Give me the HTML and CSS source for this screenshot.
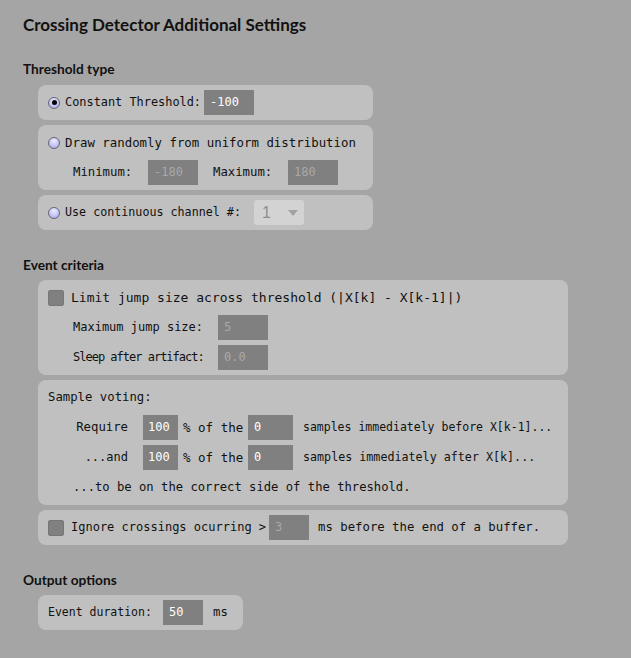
FILE: index.html
```html
<!DOCTYPE html>
<html lang="en">
<head>
<meta charset="utf-8">
<title>Crossing Detector Additional Settings</title>
<link rel="stylesheet" href="styles.css">
</head>
<body>
<div class="page">
  <h1 class="title">Crossing Detector Additional Settings</h1>

  <h2 class="section first">Threshold type</h2>
  <div class="stack narrow">
    <div class="panel">
      <div class="row">
        <span class="radio on"></span>
        <span class="txt fs119">Constant Threshold:</span>
        <span class="field w50 live gap2">-100</span>
      </div>
    </div>
    <div class="panel">
      <div class="row">
        <span class="radio"></span>
        <span class="txt fs124">Draw randomly from uniform distribution</span>
      </div>
      <div class="row indent">
        <span class="txt fs123 lab-min">Minimum:</span>
        <span class="field w50 dim">-180</span>
        <span class="txt fs123 lab-max">Maximum:</span>
        <span class="field w50 dim">180</span>
      </div>
    </div>
    <div class="panel">
      <div class="row">
        <span class="radio"></span>
        <span class="txt fs117 lab-chan">Use continuous channel #:</span>
        <span class="combo"><span class="combo-val">1</span><span class="combo-arrow"></span></span>
      </div>
    </div>
  </div>

  <h2 class="section">Event criteria</h2>
  <div class="stack wide">
    <div class="panel">
      <div class="row">
        <span class="check"></span>
        <span class="txt fs13">Limit jump size across threshold (|X[k] - X[k-1]|)</span>
      </div>
      <div class="row indent">
        <span class="txt fs12 lab-jump">Maximum jump size:</span>
        <span class="field w50 dim">5</span>
      </div>
      <div class="row indent">
        <span class="txt fs12 tight lab-jump">Sleep after artifact:</span>
        <span class="field w50 dim">0.0</span>
      </div>
    </div>
    <div class="panel">
      <div class="row">
        <span class="txt fs123">Sample voting:</span>
      </div>
      <div class="row indent">
        <span class="txt fs123 lab-vote">Require</span>
        <span class="field w35 live">100</span>
        <span class="txt fs125 lab-of">% of the</span>
        <span class="field w45 live">0</span>
        <span class="txt fs115 lab-samples">samples immediately before X[k-1]...</span>
      </div>
      <div class="row indent">
        <span class="txt fs12 lab-vote">...and</span>
        <span class="field w35 live">100</span>
        <span class="txt fs125 lab-of">% of the</span>
        <span class="field w45 live">0</span>
        <span class="txt fs117 lab-samples">samples immediately after X[k]...</span>
      </div>
      <div class="row indent">
        <span class="txt fs122">...to be on the correct side of the threshold.</span>
      </div>
    </div>
    <div class="panel">
      <div class="row">
        <span class="check"></span>
        <span class="txt fs12">Ignore crossings ocurring &gt;</span>
        <span class="field w40 dim gap2">3</span>
        <span class="txt fs123 lab-ms">ms before the end of a buffer.</span>
      </div>
    </div>
  </div>

  <h2 class="section">Output options</h2>
  <div class="stack small">
    <div class="panel">
      <div class="row">
        <span class="txt fs115 lab-dur">Event duration:</span>
        <span class="field w40 live">50</span>
        <span class="txt fs123 lab-unit">ms</span>
      </div>
    </div>
  </div>
</div>
</body>
</html>
```

FILE: styles.css
```css
html, body {
  margin: 0;
  background: #a5a5a5;
}

.page {
  padding: 12px 0 20px 23px;
  color: #111;
}

.title {
  margin: 0 0 22px;
  font: 700 17px/25px Lato, "Noto Sans", sans-serif;
  color: #111;
}

.section {
  margin: 25px 0 5px;
  font: 700 13.7px/20px Lato, "Noto Sans", sans-serif;
  color: #111;
}

.section.first {
  margin-top: 0;
  margin-bottom: 6px;
}

.stack {
  display: flex;
  flex-direction: column;
  gap: 5px;
  margin-left: 15px;
}

.stack.narrow { width: 335px; }
.stack.wide { width: 530px; }
.stack.small { width: 205px; }

.panel {
  background: #c0c0c0;
  border-radius: 8px;
  padding: 5px 10px;
  display: flex;
  flex-direction: column;
  gap: 5px;
}

.row {
  display: flex;
  align-items: center;
  height: 25px;
  font-family: "DejaVu Sans Mono", "Liberation Mono", monospace;
  font-size: 12px;
  white-space: pre;
}

.row.indent {
  padding-left: 25px;
}

.txt {
  color: #111;
  line-height: 25px;
}

.fs115 { font-size: 11.5px; }
.fs117 { font-size: 11.7px; }
.fs119 { font-size: 11.9px; }
.fs12 { font-size: 12px; }
.fs122 { font-size: 12.2px; }
.fs123 { font-size: 12.3px; }
.fs124 { font-size: 12.4px; }
.fs125 { font-size: 12.5px; }
.fs13 { font-size: 13px; }

.tight { letter-spacing: -1px; }

/* radio buttons */
.radio {
  position: relative;
  flex: none;
  width: 10px;
  height: 10px;
  margin: 0 5px 0 0;
  border: 1px solid #666674;
  border-radius: 50%;
  background: radial-gradient(circle at 50% 30%, #ececff 0%, #c4c4f4 55%, #a4a4e4 100%);
}

.radio.on::after {
  content: "";
  position: absolute;
  left: 2.5px;
  top: 2.5px;
  width: 5px;
  height: 5px;
  border-radius: 50%;
  background: #000;
}

/* check boxes */
.check {
  flex: none;
  width: 16px;
  height: 16px;
  margin: 0 7px 0 0;
  border-radius: 3px;
  background: #808080;
  box-shadow: inset 0 0 0 1px #777;
}

/* value fields */
.field {
  flex: none;
  box-sizing: border-box;
  height: 25px;
  padding-left: 6px;
  background: #808080;
  font-family: "DejaVu Sans Mono", "Liberation Mono", monospace;
  font-size: 12px;
  line-height: 25px;
}

.field.live { color: #fff; }
.field.dim { color: #a9a9a9; }

.w35 { width: 35px; padding-left: 5px; }
.w40 { width: 40px; }
.w45 { width: 45px; }
.w50 { width: 50px; }
.gap2 { margin-left: 3px; }

.lab-min { width: 75px; }
.lab-max { width: 75px; margin-left: 15px; }
.lab-chan { width: 189px; }
.lab-jump { width: 145px; }
.lab-vote { width: 55px; text-align: right; margin-right: 15px; }
.lab-of { margin: 0 5px; width: 60px; }
.lab-samples { margin-left: 10px; }
.lab-ms { margin-left: 9px; }
.lab-dur { width: 115px; }
.lab-unit { margin-left: 10px; }

/* combo box */
.combo {
  flex: none;
  display: flex;
  align-items: center;
  justify-content: space-between;
  box-sizing: border-box;
  width: 50px;
  height: 25px;
  padding: 0 6px 0 8px;
  border-radius: 3px;
  background: #d3d3d3;
}

.combo-val {
  font: 16px/25px "Liberation Sans", Arial, sans-serif;
  color: #8e8e8e;
}

.combo-arrow {
  width: 0;
  height: 0;
  border-left: 5px solid transparent;
  border-right: 5px solid transparent;
  border-top: 6px solid #a2a2a2;
}
```
